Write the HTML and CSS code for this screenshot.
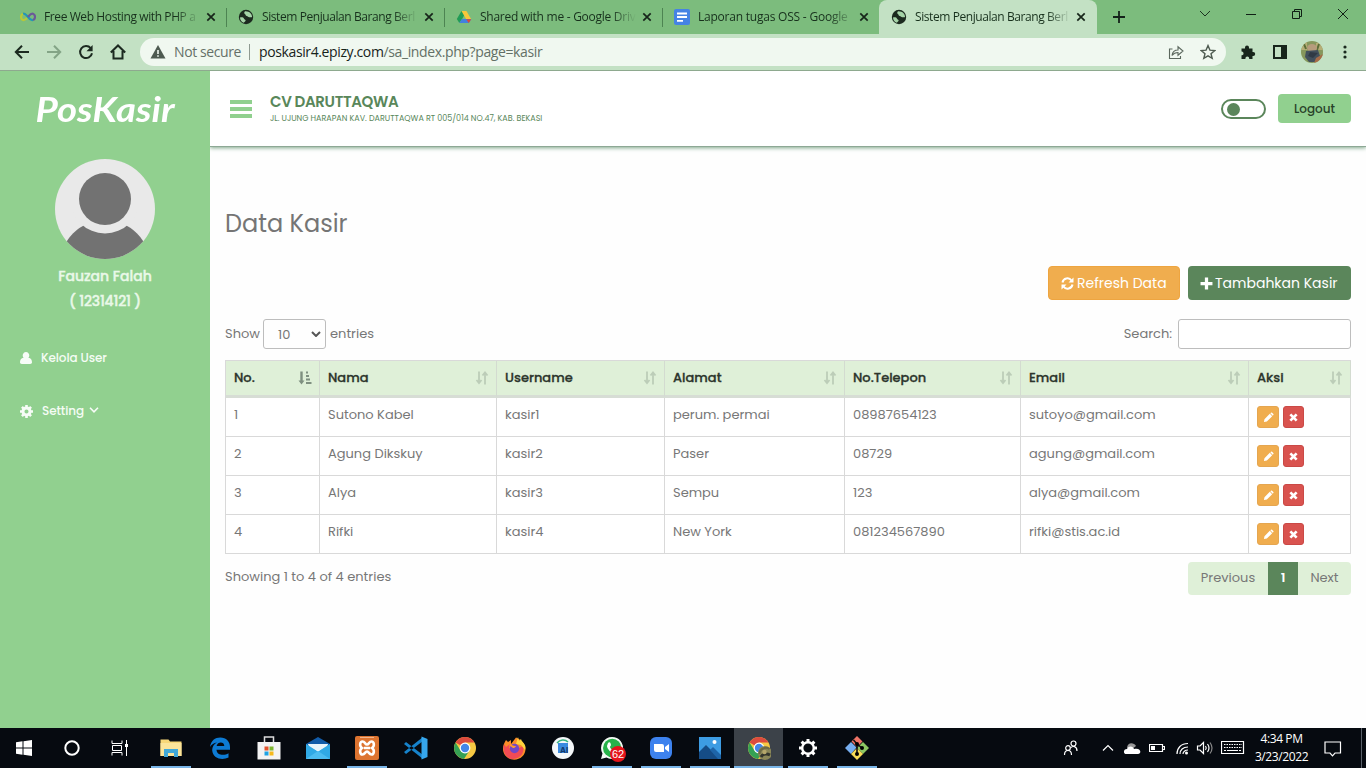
FILE: index.html
```
<!DOCTYPE html>
<html lang="id">
<head>
<meta charset="utf-8">
<title>Sistem Penjualan Barang Berbasis Web</title>
<link rel="stylesheet" href="styles.css">
</head>
<body>
<svg class="defs" aria-hidden="true">
  <symbol id="globe" viewBox="0 0 16 16"><circle cx="8" cy="8" r="7.200" fill="#1c2a1f"/><path d="M2 8.500c2-.5 3.500 0 4 1.200.3 1 2 .7 1.600 2-.3 1-1.300 1.200-1.800 2C3.500 13 2 11 2 8.500zM7 2.300c-.8 1.200-1.200 2-.2 2.600 1.200.6.6 2 2 2.200 1.200.1 1.500 1.600 2.800 1.200 1-.3 1.600.4 2.500-.3C14 5 11.500 2 7 2.300z" fill="#a5d3a7"/></symbol>
  <symbol id="close" viewBox="0 0 10 10"><path d="M1.300 1.300l7.400 7.400M8.700 1.300L1.300 8.700" stroke="#17251a" stroke-width="1.700"/></symbol>
  <symbol id="sort" viewBox="0 0 14 14"><path d="M4 .5v10M1.500 9L4 12l2.500-3M10 13.500V3M7.500 4.500L10 1.500l2.500 3" fill="none" stroke="currentColor" stroke-width="1.800"/></symbol>
  <symbol id="sort-asc" viewBox="0 0 14 14"><path d="M3.500.5v10" stroke="currentColor" stroke-width="2.400"/><path d="M.5 9.500h6L3.500 13.500zM8 .5h2v2H8zM8 4h3v2H8zM8 7.500h4v2H8zM8 11h5.500v2H8z" fill="currentColor"/></symbol>
  <symbol id="pencil" viewBox="0 0 12 12"><path d="M1 11l.6-3.200L7.400 2l2.600 2.600-5.800 5.800zM8 1.400l.7-.7q.6-.5 1.200 0l1.400 1.400q.5.600 0 1.200l-.7.700z" fill="#fff"/></symbol>
  <symbol id="times" viewBox="0 0 10 10"><path d="M1.500 1.500l7 7M8.500 1.500l-7 7" stroke="#fff" stroke-width="3"/></symbol>
  <symbol id="chrome" viewBox="0 0 24 24"><circle cx="12" cy="12" r="11" fill="#f6c943"/><path d="M12 12L2.500 6.500A11 11 0 0 1 21.500 6.500H12z" fill="#dc4b3e"/><path d="M2.500 6.500a11 11 0 0 0 8.500 16.400L16.500 14.500 12 12 7.500 14.500z" fill="#35a154"/><circle cx="12" cy="12" r="5.400" fill="#fff"/><circle cx="12" cy="12" r="4.200" fill="#4486e8"/></symbol>
</svg>

<div class="screen">
<header class="tabs">
  <div class="tab"><svg class="fav" viewBox="0 0 16 16"><path d="M8 8C5.500 4.500 4.200 4.300 3 4.800 .3 6 .5 10.300 3 11c2 .6 3.300-1 5-3" fill="none" stroke="#b9c935" stroke-width="2.200"/><path d="M3 4.700C5 4 6.500 6 8 8s3 3.600 5 3" fill="none" stroke="#2196b9" stroke-width="2.200"/><path d="M8 8c1.700-2 3-3.800 5-3.200 2.700 1 2.600 5.200 0 6.200" fill="none" stroke="#6b5a99" stroke-width="2.200"/></svg><span class="title t1">Free Web Hosting with PHP a</span><svg class="x"><use href="#close"/></svg></div>
  <div class="tab"><svg class="fav"><use href="#globe"/></svg><span class="title t2">Sistem Penjualan Barang Berl</span><svg class="x"><use href="#close"/></svg></div>
  <div class="tab"><svg class="fav" viewBox="0 0 16 16"><path d="M5.500 2h5L6 10.300 3.300 14 .8 10z" fill="#219c56"/><path d="M5.500 2h5l4.700 8.200h-5z" fill="#f8c73a"/><path d="M3.300 14l2.500-4h9.500l-2.500 4z" fill="#4281df"/><path d="M10.200 10.200h5L12.700 14z" fill="#db493c"/></svg><span class="title t3">Shared with me - Google Driv</span><svg class="x"><use href="#close"/></svg></div>
  <div class="tab last"><svg class="fav" viewBox="0 0 16 16"><rect width="16" height="16" rx="2" fill="#4583e4"/><path d="M3 4.500h10M3 8h10M3 11.800h6" stroke="#fff" stroke-width="1.800"/></svg><span class="title t4">Laporan tugas OSS - Google</span><svg class="x"><use href="#close"/></svg></div>
  <div class="tab active"><svg class="fav"><use href="#globe"/></svg><span class="title t2">Sistem Penjualan Barang Berl</span><svg class="x"><use href="#close"/></svg></div>
  <svg class="plus" viewBox="0 0 12 12"><path d="M6 0v12M0 6h12" stroke="#14221a" stroke-width="1.800"/></svg>
  <div class="winbtns">
    <svg viewBox="0 0 12 12"><path d="M1 3l5 5 5-5" fill="none" stroke="#1b3320"/></svg>
    <svg viewBox="0 0 12 12"><path d="M1 6.500h10" stroke="#102015"/></svg>
    <svg viewBox="0 0 12 12"><path d="M1.500 3.500h7v7h-7zM3.500 3V1.500h7v7H9" fill="none" stroke="#102015"/></svg>
    <svg viewBox="0 0 12 12"><path d="M1 1l10 10M11 1L1 11" stroke="#102015"/></svg>
  </div>
</header>

<nav class="toolbar">
  <svg class="nav" viewBox="0 0 16 16"><path d="M15 8H2M8 1.800L1.800 8 8 14.200" fill="none" stroke="#1c2a20" stroke-width="2"/></svg>
  <svg class="nav" viewBox="0 0 16 16"><path d="M1 8h13M8 1.800L14.200 8 8 14.200" fill="none" stroke="#83a486" stroke-width="2"/></svg>
  <svg class="nav" viewBox="0 0 16 16"><path d="M12.700 4.200A6 6 0 1 0 14 9.300" fill="none" stroke="#1c2a20" stroke-width="2"/><path d="M14.600 1v6.200H8.500z" fill="#1c2a20"/></svg>
  <svg class="nav" viewBox="0 0 16 16"><path d="M.8 8.500L8 1.500l7.200 7M3.500 7v7.500h9V7" fill="none" stroke="#1c2a20" stroke-width="2"/></svg>
  <div class="omni">
    <svg class="warn" viewBox="0 0 16 14"><path d="M8 0l7.500 13.500H.5z" fill="#4d5a50"/><path d="M8 5v4M8 10.200v1.600" stroke="#f0f8f0" stroke-width="1.600"/></svg>
    <span class="ns">Not secure</span><i class="bar"></i><span class="url"><b>poskasir4.epizy.com</b>/sa_index.php?page=kasir</span>
    <svg class="share" viewBox="0 0 16 16"><path d="M4.500 5H1.500v9.500h11V12M4 11.500C4.500 8 6.500 6 10 6V2.800L15 7l-5 4.200V8.500c-2.500 0-4.500 1-6 3z" fill="none" stroke="#5b675d" stroke-width="1.100"/></svg>
    <svg class="star" viewBox="0 0 16 16"><path d="M8 1.600l1.900 4.500 4.900.4L11 9.700l1.200 4.700L8 11.900l-4.200 2.500L5 9.700 1.200 6.500l4.900-.4z" fill="none" stroke="#4e5b50" stroke-width="1.400"/></svg>
  </div>
  <svg class="ext" viewBox="0 0 16 16"><path d="M1.500 4.500H5V3.500a2 2 0 0 1 4 0v1h3.500V8h.7a2 2 0 0 1 0 4h-.7v3H9.200v-.6a1.900 1.900 0 0 0-3.800 0v.6H1.500v-3.700h.6a1.900 1.900 0 0 0 0-3.700h-.6z" fill="#17251b"/></svg>
  <svg class="side" viewBox="0 0 16 16"><path d="M2 2h12v12H2z" fill="none" stroke="#17251b" stroke-width="2"/><path d="M9 2h5v12H9z" fill="#17251b"/></svg>
  <svg class="me" viewBox="0 0 22 22"><clipPath id="c"><circle cx="11" cy="11" r="11"/></clipPath><g clip-path="url(#c)"><path d="M0 0h22v22H0z" fill="#86975c"/><path d="M0 0h6v9H0zM15 2h7v7h-7z" fill="#b5ad76"/><path d="M3 3l2 5M18 3l-2 6" stroke="#5c6d38" stroke-width="2"/><ellipse cx="11" cy="7" rx="5" ry="4" fill="#b69c7c"/><path d="M5 10l12-1 2 6-4 6H8l-4-5z" fill="#42505c"/><path d="M9 11l8 1-5 5-5-2z" fill="#303a45"/><path d="M15 17l7-4v9h-9z" fill="#a66b47"/></g></svg>
  <svg class="dots" viewBox="0 0 4 16"><circle cx="2" cy="3" r="1.600"/><circle cx="2" cy="8" r="1.600"/><circle cx="2" cy="13" r="1.600"/></svg>
</nav>

<div class="page">
  <aside class="sidebar">
    <div class="logo">PosKasir</div>
    <svg class="avatar" viewBox="0 0 100 100"><clipPath id="a"><circle cx="50" cy="50" r="50"/></clipPath><g clip-path="url(#a)"><path d="M0 0h100v100H0z" fill="#e9e9e9"/><circle cx="50" cy="106" r="45" fill="#727272"/><circle cx="50" cy="40" r="34.500" fill="#e9e9e9"/><circle cx="50" cy="40" r="26" fill="#727272"/></g></svg>
    <div class="who"><span>Fauzan Falah</span><br><span class="code">( 12314121 )</span></div>
    <a class="item"><svg viewBox="0 0 12 12"><path d="M6 0a3.200 3.400 0 0 1 2.400 5.700C11 6 12 8 12 10.300 12 11.500 11.300 12 10.200 12H1.800C.7 12 0 11.500 0 10.300 0 8 1 6 3.600 5.700A3.200 3.400 0 0 1 6 0z" fill="#f7fcf7"/></svg><span class="ku">Kelola User</span></a>
    <a class="item set"><svg class="cog" viewBox="0 0 14 14"><circle cx="7" cy="7" r="3.800" fill="none" stroke="#f7fcf7" stroke-width="3.200"/><path d="M7 0v3M7 11v3M0 7h3M11 7h3M2.100 2.100l2 2M9.900 9.900l2 2M11.900 2.100l-2 2M2.100 11.900l2-2" stroke="#f7fcf7" stroke-width="2.800"/></svg><span class="st">Setting</span><svg class="chev" viewBox="0 0 10 6"><path d="M1 .8l4 4 4-4" fill="none" stroke="#f7fcf7" stroke-width="1.600"/></svg></a>
  </aside>

  <main class="main">
    <div class="top">
      <svg class="burger" viewBox="0 0 22 18"><path d="M0 2h22M0 9h22M0 16h22" stroke="#90d08e" stroke-width="4"/></svg>
      <div class="firm"><div class="name">CV DARUTTAQWA</div><div class="addr">JL. UJUNG HARAPAN KAV. DARUTTAQWA RT 005/014 NO.47, KAB. BEKASI</div></div>
      <div class="switch"><i></i></div>
      <button class="logout">Logout</button>
    </div>
    <div class="content">
      <h1>Data Kasir</h1>
      <div class="actions">
        <button class="btn warnb"><svg viewBox="0 0 13 13"><path d="M1.500 5.500A5 5 0 0 1 10.500 3.500M11.500 7.500A5 5 0 0 1 2.500 9.500" fill="none" stroke="#fff" stroke-width="2"/><path d="M12.500.5v5h-5zM.5 12.500v-5h5z" fill="#fff"/></svg><span class="rf">Refresh Data</span></button>
        <button class="btn green"><svg viewBox="0 0 12 12"><path d="M6 .5v11M.5 6h11" stroke="#fff" stroke-width="3"/></svg><span class="tk">Tambahkan Kasir</span></button>
      </div>
      <div class="filters">
        <span class="sh">Show</span><span class="select">10<svg viewBox="0 0 10 6"><path d="M1 1l4 4 4-4" fill="none" stroke="#555" stroke-width="2"/></svg></span><span class="en">entries</span>
        <span class="se">Search:</span><input class="search" type="text">
      </div>
      <table>
        <colgroup><col class="c1"><col class="c2"><col class="c3"><col class="c4"><col class="c5"><col class="c6"><col class="c7"></colgroup>
        <thead><tr>
          <th><div>No.<svg class="on"><use href="#sort-asc"/></svg></div></th><th><div>Nama<svg><use href="#sort"/></svg></div></th><th><div>Username<svg><use href="#sort"/></svg></div></th><th><div>Alamat<svg><use href="#sort"/></svg></div></th><th><div>No.Telepon<svg><use href="#sort"/></svg></div></th><th><div>Email<svg><use href="#sort"/></svg></div></th><th><div>Aksi<svg><use href="#sort"/></svg></div></th>
        </tr></thead>
        <tbody>
          <tr><td>1</td><td>Sutono Kabel</td><td>kasir1</td><td>perum. permai</td><td>08987654123</td><td>sutoyo@gmail.com</td><td><div class="acts"><span class="e"><svg><use href="#pencil"/></svg></span><span class="d"><svg><use href="#times"/></svg></span></div></td></tr>
          <tr><td>2</td><td>Agung Dikskuy</td><td>kasir2</td><td>Paser</td><td>08729</td><td>agung@gmail.com</td><td><div class="acts"><span class="e"><svg><use href="#pencil"/></svg></span><span class="d"><svg><use href="#times"/></svg></span></div></td></tr>
          <tr><td>3</td><td>Alya</td><td>kasir3</td><td>Sempu</td><td>123</td><td>alya@gmail.com</td><td><div class="acts"><span class="e"><svg><use href="#pencil"/></svg></span><span class="d"><svg><use href="#times"/></svg></span></div></td></tr>
          <tr><td>4</td><td>Rifki</td><td>kasir4</td><td>New York</td><td>081234567890</td><td>rifki@stis.ac.id</td><td><div class="acts"><span class="e"><svg><use href="#pencil"/></svg></span><span class="d"><svg><use href="#times"/></svg></span></div></td></tr>
        </tbody>
      </table>
      <div class="foot"><span class="info">Showing 1 to 4 of 4 entries</span><div class="pager"><span class="prev">Previous</span><span class="cur">1</span><span class="next">Next</span></div></div>
    </div>
  </main>
</div>

<footer class="taskbar">
  <span class="sys"><svg viewBox="0 0 24 24"><path d="M4 6.300l6.500-1v6.200H4zM11.500 5.200L20 4v7.500h-8.500zM4 12.500h6.500v6.200L4 17.700zM11.500 12.500H20V20l-8.500-1.200z" fill="#fff"/></svg></span>
  <span class="sys"><svg viewBox="0 0 24 24"><circle cx="12" cy="12" r="6.700" fill="none" stroke="#fff" stroke-width="2"/></svg></span>
  <span class="sys"><svg viewBox="0 0 24 24"><path d="M4 4.500v3h10v-3M4 19.500v-3h10v3M4.500 9.500h9v5h-9zM18.500 4v16" fill="none" stroke="#fff"/><path d="M17 8h3v3h-3z" fill="#fff"/></svg></span>
  <span class="app first on"><svg viewBox="0 0 24 24"><path d="M1.500 3.500h8l1.500 2h11.500V20h-21z" fill="#f7d778"/><path d="M1.500 7h21v13h-21z" fill="#fbe49a"/><path d="M5 13h14v8h-4v-4H9v4H5z" fill="#41a8d8"/></svg></span>
  <span class="app"><svg viewBox="0 0 24 24"><path d="M2 11C3 4.500 7 1.500 12.300 1.500c6 0 9.700 4.200 9.700 9.500v2.700H8.500c.2 5.500 7.500 6.400 12 3.600v4.200C14.500 24.500 5 23 4.200 14.500 4 11 6 8 9 6.500 5.800 7 3.500 8.500 2 11zM8.600 9.900h7.700c0-4.500-6.700-4.600-7.700 0z" fill="#0d7bd4"/></svg></span>
  <span class="app"><svg viewBox="0 0 24 24"><path d="M7.500 6.500V1h9v5.500" fill="none" stroke="#ddd" stroke-width="1.500"/><path d="M.5 6h23v17.500H.5z" fill="#f3f3f3"/><path d="M7.500 10.500h4v4h-4z" fill="#e2532d"/><path d="M12.500 10.500h4v4h-4z" fill="#7cb52d"/><path d="M7.500 15.500h4v4h-4z" fill="#20a3e4"/><path d="M12.500 15.500h4v4h-4z" fill="#f6b91c"/></svg></span>
  <span class="app"><svg viewBox="0 0 24 24"><path d="M0 8l12-7 12 7v6H0z" fill="#125ca9"/><path d="M2 8h20l-3 9H5z" fill="#e9f5fb"/><path d="M0 8l12 7.500L24 8v15H0z" fill="#30a9e5"/><path d="M2 8h20L12 15.500z" fill="#e9f5fb"/><path d="M0 23l12-8 12 8z" fill="#4cbcf0"/></svg></span>
  <span class="app on"><svg viewBox="0 0 24 24"><rect width="24" height="24" rx="2" fill="#dd7430"/><path d="M5 1.500h14" stroke="#f0b58d"/><path d="M7.500 5.500c2.500 0 2.500 3 4.500 3s2-3 4.500-3 3.500 4.500.5 6.500c3 2 2 6.500-.5 6.500s-2.500-3-4.500-3-2 3-4.500 3S4 14 7 12C4 10 5 5.500 7.500 5.500zM9 12h6" fill="none" stroke="#fff" stroke-width="2.600"/></svg></span>
  <span class="app"><svg viewBox="0 0 24 24"><path d="M0 8l2-2 17 13v4zM0 16l2 2L19 5V1z" fill="#1683cc"/><path d="M17.500.5l6 2.500v18l-6 2.500z" fill="#36a7ed"/></svg></span>
  <span class="app"><svg><use href="#chrome"/></svg></span>
  <span class="app"><svg viewBox="0 0 24 24"><path d="M4 4l2 2 3-2v4L14 1.500c4 1.500 9.500 6 9.500 11.500A11 10.500 0 0 1 1 13C1 9 2.500 6.500 4 4z" fill="#fb8c28"/><path d="M2 8l2 3 4-3-1 4 4 3 6-3 4-2c2 8-4 13-10 13S0 17 2 8z" fill="#f14b55"/><path d="M16 1l-2 7 5 1 4 5c2-6-3-7-4-11l-2 2z" fill="#ffd33d"/><circle cx="12.500" cy="12.500" r="4.700" fill="#7347c6"/><path d="M7 9c3-1 4 1 6 1s0 2-2 2z" fill="#ff9a2f"/></svg></span>
  <span class="app"><svg viewBox="0 0 24 24"><circle cx="12" cy="12" r="11" fill="#f4f8fa"/><path d="M7 7h10v10H7z" fill="#3a8be0"/><path d="M6 7c3-3.500 8-4 11-1" fill="none" stroke="#37b681" stroke-width="1.500"/><text x="9" y="17" class="ai">AI</text></svg></span>
  <span class="app on wa"><svg viewBox="0 0 24 24"><path d="M12 1a11 11 0 1 1-5.500 20.500L1 23l1.500-5.500A11 11 0 0 1 12 1z" fill="#f4faf5"/><circle cx="12.200" cy="12" r="9.200" fill="#27b34a"/><path d="M8 7c2-2 3 1 3 2s-1 1-1 2 3 4 4 3 3-1 3.500.5S15 18 13 17.500 7 12.500 7 10z" fill="#fff"/></svg><b>62</b></span>
  <span class="app on"><svg viewBox="0 0 24 24"><rect x="1" y="1" width="22" height="22" rx="6" fill="#3d82ee"/><path d="M5 8h8q2 0 2 2v6H7q-2 0-2-2zM16 11l4-3v8l-4-3z" fill="#fff"/></svg></span>
  <span class="app on"><svg viewBox="0 0 24 24"><path d="M1 1h22v22H1z" fill="#3d9ce3"/><path d="M1 16L8 9l14 14H1z" fill="#154c86"/><path d="M12 14l3-3 8 8v4h-3z" fill="#1e65a9"/><circle cx="16.500" cy="6" r="2" fill="#fff"/></svg></span>
  <span class="app on focus"><svg viewBox="0 0 24 24"><use href="#chrome"/><ellipse cx="18" cy="17" rx="7" ry="7" fill="#8a8658"/><path d="M12.500 18c0-5 6-8 10-5" stroke="#6c6a45" stroke-width="2" fill="none"/><path d="M14 21c2-4 7-3 9-2" stroke="#34362e" stroke-width="3" fill="none"/><circle cx="17.500" cy="16" r="2.200" fill="#b4a66b"/></svg></span>
  <span class="app on"><svg viewBox="0 0 24 24"><circle cx="12" cy="12" r="5.800" fill="none" stroke="#fff" stroke-width="2.400"/><path d="M12 3v3M12 18v3M3 12h3M18 12h3M5.600 5.600l2 2M16.400 16.400l2 2M18.400 5.600l-2 2M5.600 18.400l2-2" stroke="#fff" stroke-width="3"/></svg></span>
  <span class="app on"><svg viewBox="0 0 24 24"><path d="M12 0l5.500 5.500L12 11 6.500 5.500z" fill="#ef7467"/><path d="M6 6l5.500 5.500L6 18 0 12z" fill="#76aef0"/><path d="M18 6l6 6-6 6-6-6z" fill="#8dc763"/><path d="M12 12l6 6-6 6-6-6z" fill="#f8dc56"/><path d="M8.500 4l3.500 4v11M12 8l5 4" stroke="#111" stroke-width="1.600" fill="none"/><circle cx="12" cy="8" r="2"/><circle cx="17" cy="12" r="2"/><circle cx="12" cy="18" r="2"/></svg></span>

  <div class="tray">
    <svg class="people" viewBox="0 0 16 16"><circle cx="10.500" cy="3.500" r="2.500"/><circle cx="5" cy="8" r="2.300"/><path d="M1.500 15c0-6 7-6 7 0M7.500 8c2-2.500 6.500-2 6.500 3"/></svg>
    <svg class="chv" viewBox="0 0 12 8"><path d="M1 6.500l5-5 5 5"/></svg>
    <svg class="cloud" viewBox="0 0 18 12"><path d="M4 6C4 0 11 0 13 4l-5 4z" fill="#999" stroke="none"/><path d="M3.500 12C0 12 0 7 4 7c2-3.500 6-3 7 0 7-2 8 5 4 5z" fill="#fff" stroke="none"/></svg>
    <svg class="bat" viewBox="0 0 16 10"><path d="M.5 1.500h13v7H.5zM14 3.500h1.500v3H14"/><path d="M2 3h4v4H2z" fill="#fff" stroke="none"/></svg>
    <svg class="wifi" viewBox="0 0 14 14"><path d="M2 13C2 7 6 2.500 13 2.500M5 13c0-4 3-7 8-7M8 13c0-2 2-4 5-4"/><circle cx="11.500" cy="12" r="1.500" fill="#fff" stroke="none"/></svg>
    <svg class="vol" viewBox="0 0 18 14"><path d="M1.500 5h2.500l3.500-3.500v11L4 9H1.500zM9.500 5q1.500 2 0 4M11.500 3q3 4 0 8"/><path d="M14 1.500q4 5.500 0 11" stroke="#888"/></svg>
    <svg class="kbd" viewBox="0 0 24 14"><path d="M.5 .5h22v12H.5z"/><path d="M3 3.500h18M3 6.500h18" stroke-dasharray="1.500 1"/><path d="M3 9.500h2M6 9.500h11M18 9.500h2"/></svg>
    <div class="clock">4:34 PM<br>3/23/2022</div>
    <svg class="note" viewBox="0 0 18 16"><path d="M1 1h15.500v11H11l-2.500 2.800L6 12H1z"/></svg>
    <i class="edge"></i>
  </div>
</footer>
</div>
</body>
</html>
```
FILE: styles.css
```
* { box-sizing: border-box; }
body { margin: 0; width: 1366px; height: 768px; overflow: hidden; font-family: Poppins, Inter, sans-serif; font-size: 13px; color: #777; }
svg { display: block; flex: none; }
.defs { display: none; }
.screen { display: flex; flex-direction: column; height: 768px; }

/* browser chrome */
.tabs { height: 34px; flex: none; background: #7cbc7d; display: flex; padding-left: 8px; font: 12px/34px "Open Sans", sans-serif; color: #17301c; }
.tab { width: 218px; display: flex; align-items: center; padding: 0 10px 0 12px; position: relative; }
.tab::after { content: ""; position: absolute; right: -1px; top: 8px; width: 1px; height: 19px; background: #4d8452; }
.tab.last { width: 217px; }
.tab.last::after, .tab.active::after { display: none; }
.tab.active { background: #c3e1c4; border-radius: 8px 8px 0 0; }
.fav { width: 16px; height: 16px; margin-right: 8px; }
.title { width: 156px; white-space: nowrap; flex: none; -webkit-mask-image: linear-gradient(90deg, #000 84%, transparent); mask-image: linear-gradient(90deg, #000 84%, transparent); }
.t1 { letter-spacing: -.4px; }
.t2 { letter-spacing: -.42px; }
.t3 { letter-spacing: -.27px; }
.t4 { letter-spacing: -.22px; }
.x { width: 10px; height: 10px; margin-left: 6px; }
.tab.active .x, .tab.last .x { margin-left: 5px; }
.plus { width: 12px; height: 12px; margin: 11px 0 0 16px; }
.winbtns { display: flex; margin: 8px 17px 0 auto; gap: 34px; }
.winbtns svg { width: 12px; height: 12px; }

.toolbar { height: 37px; flex: none; background: #c3e1c4; border-bottom: 1px solid #8ea98f; display: flex; align-items: center; padding-left: 14px; }
.nav { width: 16px; height: 16px; margin-right: 16px; }
.omni { width: 1086px; height: 28px; border-radius: 14px; background: #f0f8f0; display: flex; align-items: center; padding: 0 10px; margin-left: -2px; font: 14px/26px "Open Sans", sans-serif; }
.warn { width: 16px; height: 14px; margin-right: 8px; }
.ns { color: #657068; width: 66px; white-space: nowrap; letter-spacing: -.4px; }
.bar { width: 1px; height: 16px; background: #8f9a91; margin: 0 9px; }
.url { color: #637066; letter-spacing: -.38px; }
.url b { font-weight: 400; color: #17231b; }
.share { width: 16px; height: 16px; margin-left: auto; margin-right: 16px; }
.star { width: 16px; height: 16px; }
.ext { width: 16px; height: 16px; margin-left: 14px; }
.side { width: 16px; height: 16px; margin-left: 16px; }
.me { width: 22px; height: 22px; margin-left: 13px; }
.dots { width: 4px; height: 16px; margin-left: 20px; fill: #1a291e; }

/* sidebar */
.page { flex: 1; display: flex; min-height: 0; background: #fefefe; }
.sidebar { width: 210px; background: #91d08f; display: flex; flex-direction: column; }
.logo { font: italic 700 34px/40px Lato, sans-serif; color: #fff; text-align: center; margin-top: 18px; transform: scaleX(1.130); }
.avatar { width: 100px; height: 100px; margin: 30px auto 0; }
.who { text-align: center; font-size: 14px; line-height: 25px; font-weight: 500; -webkit-text-stroke: .4px; color: #e9f8e8; margin-top: 5px; height: 50px; }
.code { letter-spacing: -.2px; }
.item { display: flex; align-items: center; height: 20px; padding-left: 20px; margin-top: 34px; font-size: 12px; font-weight: 500; color: #f5fcf5; }
.item svg { width: 12px; height: 12px; margin-right: 9px; }
.ku, .st { letter-spacing: -.1px; }
.item.set { margin-top: 33px; }
.item .cog { width: 13px; height: 13px; }
.item .chev { width: 10px; height: 6px; margin: 0 0 2px 5px; }

/* page header */
.main { flex: 1; display: flex; flex-direction: column; }
.top { height: 76px; background: #fff; border-bottom: 1px solid #8da895; box-shadow: 0 1px 4px #7fa789; clip-path: inset(0 0 -8px 0); display: flex; align-items: center; padding: 0 15px 0 20px; }
.burger { width: 22px; height: 18px; margin-top: 1px; }
.firm { margin-left: 18px; color: #59875a; }
.name { font-size: 15px; line-height: 20px; font-weight: 600; letter-spacing: -.38px; }
.addr { font-size: 8px; line-height: 12px; white-space: nowrap; margin-top: 1px; }
.switch { width: 45px; height: 20px; border: 2px solid #5b865b; border-radius: 10px; margin-left: auto; display: flex; align-items: center; padding-left: 4px; margin-top: 1px; }
.switch i { width: 13px; height: 13px; border-radius: 50%; background: #5b865b; }
.logout { width: 73px; height: 29px; margin-left: 12px; border: 0; border-radius: 4px; background: #91d08f; font: 500 12px Poppins, Inter, sans-serif; color: #284129; padding: 0; }

/* content */
.content { padding: 0 15px; }
h1 { font-size: 24px; line-height: 30px; font-weight: 400; margin: 62px 0 0; color: #757575; }
.actions { display: flex; justify-content: flex-end; gap: 8px; margin-top: 27px; }
.btn { height: 34px; border-radius: 4px; color: #fff; font: 14px Poppins, Inter, sans-serif; display: flex; align-items: center; padding: 0 0 0 12px; white-space: nowrap; }
.btn svg { width: 13px; height: 13px; margin-right: 3px; }
.warnb { width: 132px; background: #f0ad4e; border: 1px solid #eea540; }
.green { width: 163px; background: #5b865b; border: 0; }
.green svg { margin-right: 2px; }
.filters { display: flex; height: 30px; margin-top: 19px; line-height: 30px; }
.sh { width: 38px; }
.select { width: 63px; height: 30px; border: 1px solid #bdbdbd; border-radius: 3px; display: flex; align-items: center; padding: 1px 0 0 14px; }
.select svg { width: 10px; height: 6px; margin: 0 0 2px 21px; margin-left: auto; margin-right: 4px; }
.en { margin-left: 4px; }
.se { margin-left: auto; margin-right: 6px; }
.search { width: 173px; height: 30px; border: 1px solid #bdbdbd; border-radius: 3px; background: #fff; }
table { width: 1126px; margin-top: 11px; table-layout: fixed; border-collapse: separate; border-spacing: 0; border: solid #d9d9d9; border-width: 1px 0 0 1px; }
.c1 { width: 94px; } .c2 { width: 177px; } .c3 { width: 168px; } .c4 { width: 180px; } .c5 { width: 176px; } .c6 { width: 228px; } .c7 { width: 102px; }
th { height: 37px; background: #dff0d8; border-right: 1px solid #d3dbd0; border-bottom: 3px solid #d7ddd5; padding: 0 7px 0 8px; text-align: left; font-weight: 500; -webkit-text-stroke: .3px; color: #2c352c; }
th div { display: flex; justify-content: space-between; align-items: center; height: 33px; }
th svg { width: 14px; height: 14px; color: #bccdb8; }
th svg.on { color: #7f9080; }
td { height: 39px; border-right: 1px solid #d9d9d9; border-bottom: 1px solid #d9d9d9; padding: 8px 8px 0; vertical-align: top; line-height: 18px; background: #fff; }
.acts { display: flex; gap: 4px; }
.acts span { height: 22px; border-radius: 3px; display: flex; align-items: center; justify-content: center; }
.e { width: 22px; background: #f0ad4e; border: 1px solid #e5a650; }
.d { width: 21px; background: #d9534f; border: 1px solid #ca4946; }
.e svg { width: 11px; height: 11px; }
.d svg { width: 9px; height: 9px; }
.foot { display: flex; justify-content: space-between; margin-top: 8px; line-height: 30px; }
.pager { display: flex; height: 33px; background: #dff0d8; border-radius: 4px; line-height: 32px; text-align: center; }
.prev { width: 80px; } .cur { width: 30px; background: #5b865b; color: #fff; font-weight: 600; } .next { width: 53px; }

/* taskbar */
.taskbar { height: 40px; flex: none; background: #060a10; display: flex; }
.sys, .app { height: 40px; display: flex; align-items: center; justify-content: center; position: relative; }
.sys { width: 48px; } .app { width: 49px; } .first { margin-left: 2px; }
.sys svg, .app svg { width: 24px; height: 24px; }
.on.app::after { content: ""; position: absolute; left: 5px; bottom: 0; width: 40px; height: 2px; background: #79b5e8; }
.focus { background: #3c4249; }
.focus.app::after { left: 0; width: 49px; }
.ai { font: bold 8px Inter, sans-serif; fill: #12396b; }
.wa b { position: absolute; right: 10px; top: 18px; width: 16px; height: 16px; border-radius: 8px; background: #e5141b; color: #fff; font: 11px/16px "Liberation Sans", sans-serif; text-align: center; }
.tray { margin-left: auto; display: flex; align-items: center; padding-right: 4px; fill: none; stroke: #fff; stroke-width: 1.200; }
.tray svg { width: 16px; height: 16px; }
.tray .chv { width: 12px; height: 8px; margin-left: 23px; }
.tray .cloud { width: 18px; height: 12px; margin-left: 9px; }
.tray .bat { width: 16px; height: 10px; margin-left: 8px; }
.tray .wifi { width: 14px; height: 14px; margin-left: 10px; }
.tray .vol { width: 18px; height: 14px; margin-left: 7px; }
.tray .kbd { width: 24px; height: 14px; margin-left: 7px; }
.clock { width: 73px; color: #fff; text-align: center; font: 12px/18px "Open Sans", sans-serif; letter-spacing: -.4px; }
.tray .note { width: 18px; height: 16px; margin: 2px 0 0 6px; }
.edge { width: 1px; height: 40px; background: #596069; margin-left: 19px; }
```
